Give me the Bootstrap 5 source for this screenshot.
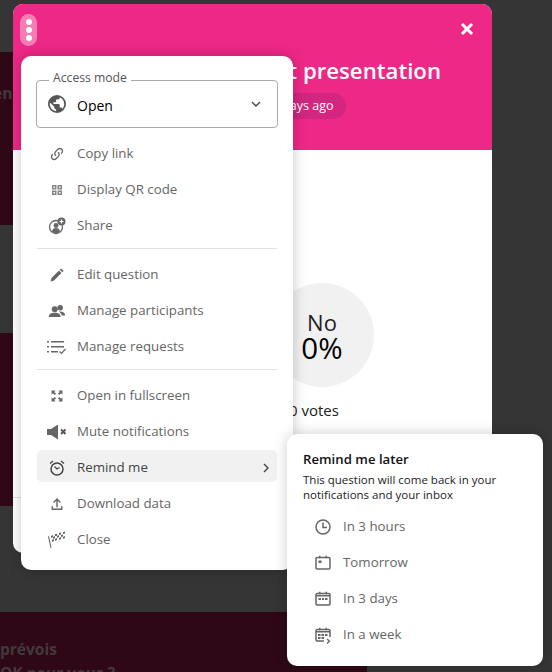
<!DOCTYPE html>
<html lang="en">
<head>
<meta charset="utf-8">
<title>Question</title>
<link href="https://cdn.jsdelivr.net/npm/bootstrap@5.3.0/dist/css/bootstrap.min.css" rel="stylesheet">
<style>
html,body{height:672px;overflow:hidden}
body{background:#353535;font-family:"Open Sans","Liberation Sans",sans-serif;position:relative}
.bg-stack{width:367px}
.bg-gap{background:#353535}
.bg-gap-a{height:52px}
.bg-gap-b{height:108px}
.bg-gap-c{height:106px}
.bg-tile{background:#2e0816;color:#43393d;font-weight:700;font-size:15.500px;line-height:24px;overflow:hidden}
.bg-tile-a{height:173px;padding-top:29px}
.bg-tile-b{height:173px;padding-top:30px}
.bg-tile-c{height:60px;padding-top:25px}
.bg-tile span{display:block;white-space:nowrap}
.shift-a{margin-left:-7px}
.shift-b{margin-left:-14px}
.q-modal{position:absolute;left:13px;top:4px;width:479px;height:549px;background:#fff;border-radius:10px;overflow:hidden}
.q-head{height:146px;background:#ee2887;color:#fff;padding-top:50px}
.q-title{font-size:22.200px;font-weight:600;line-height:34px;white-space:nowrap;text-align:right;padding-right:51px}
.q-pill{width:186px;height:26px;background:#d22680;border-radius:13px;font-size:12.500px;line-height:26px;margin:5px auto 0;text-align:right;padding-right:12px}
.q-x{position:absolute;right:18px;top:18px;width:14px;height:14px}
.q-dots{position:absolute;left:7px;top:10px;width:17px;height:32px;border-radius:9px;background:#f67db4;padding:5px 0;gap:2px}
.q-dots i{width:6px;height:6px;border-radius:50%;background:#fff}
.q-body{height:403px}
.q-disc{position:absolute;left:257px;top:279px;width:104px;height:104px;border-radius:50%;background:#f1f1f1;color:#222}
.q-disc-l{font-size:22px;line-height:24px;padding-top:1px}
.q-disc-v{font-size:29.500px;line-height:28px;color:#000}
.q-votes{position:absolute;left:249px;top:396px;width:104px;font-size:15px;line-height:20px;text-align:center;color:#222}
.q-rule{position:absolute;left:0;right:0;top:493px;border-top:1px solid #ddd}
.q-menu{position:absolute;left:21px;top:56px;width:272px;height:514px;background:#fff;border-radius:10px;box-shadow:0 0 14px rgba(0,0,0,.22);padding:24px 15px 0}
.q-field{position:relative;height:48px;border:1px solid #aaa;border-radius:4px;padding-left:11px;gap:11px;color:#000;font-size:14px;margin-bottom:7px}
.q-field span.q-val{padding-top:2px}
.q-legend{position:absolute;left:12px;top:-12px;padding:0 4px;background:#fff;font-size:12.200px;line-height:18px;color:#555}
.q-lines{margin:0 1px}
.q-row{height:36px;font-size:13.300px;color:#666;padding:2px 0 0 10px;gap:10px}
.q-row svg{flex:none}
.q-row.is-on{height:32px;margin:1px 0 3px;padding-top:4px;background:#f1f1f1;border-radius:5px;color:#444}
.q-sep{border-top:1px solid #e3e3e3;margin:5px 0 7px;height:0}
.q-ico{width:20px;height:20px;fill:#666}
.q-globe{width:18px;height:18px;fill:#555;flex:none}
.q-chev{margin-left:auto;margin-right:16px}
.q-chev-side{margin-left:auto;margin-right:8px}
.q-pop{position:absolute;left:287px;top:434px;width:256px;height:232px;background:#fff;border-radius:10px;box-shadow:0 0 14px rgba(0,0,0,.2);padding:16px 16px 0}
.q-pop-t{font-size:13.200px;font-weight:600;line-height:18px;color:#111}
.q-pop-d{font-size:11.500px;line-height:15px;color:#222;margin:4px 0 6px}
</style>
</head>
<body>
<div class="bg-stack">
  <div class="bg-gap bg-gap-a"></div>
  <div class="bg-tile bg-tile-a"><span class="shift-a">en</span></div>
  <div class="bg-gap bg-gap-b"></div>
  <div class="bg-tile bg-tile-b"><span class="shift-b">pl</span></div>
  <div class="bg-gap bg-gap-c"></div>
  <div class="bg-tile bg-tile-c"><span>prévois</span><span>OK pour vous ?</span></div>
</div>

<div class="q-modal">
  <div class="q-head">
    <div class="q-title">t presentation</div>
    <div class="q-pill">ays ago</div>
  </div>
  <div class="q-body"></div>
  <div class="q-disc d-flex flex-column align-items-center justify-content-center"><div class="q-disc-l">No</div><div class="q-disc-v">0%</div></div>
  <div class="q-votes">0 votes</div>
  <div class="q-rule"></div>
  <svg class="q-x" viewBox="0 0 14 14"><path d="M2 2 12 12M12 2 2 12" stroke="#fff" stroke-width="3"/></svg>
  <div class="q-dots d-flex flex-column align-items-center"><i></i><i></i><i></i></div>
</div>

<div class="q-menu">
  <div class="q-field d-flex align-items-center">
    <span class="q-legend">Access mode</span>
    <svg class="q-globe" viewBox="2 2 20 20"><path d="M17.9,17.39C17.64,16.59 16.89,16 16,16H15V13A1,1 0 0,0 14,12H8V10H10A1,1 0 0,0 11,9V7H13A2,2 0 0,0 15,5V4.59C17.93,5.77 20,8.64 20,12C20,14.08 19.2,15.97 17.9,17.39M11,19.93C7.05,19.44 4,16.08 4,12C4,11.38 4.08,10.78 4.21,10.21L9,15V16A2,2 0 0,0 11,18M12,2A10,10 0 0,0 2,12A10,10 0 0,0 12,22A10,10 0 0,0 22,12A10,10 0 0,0 12,2Z"/></svg>
    <span class="q-val">Open</span>
    <svg class="q-chev" width="10" height="6" viewBox="0 0 10 6"><path d="M1 1l4 4 4-4" fill="none" stroke="#444" stroke-width="1.400"/></svg>
  </div>
  <div class="q-lines">
  <div class="q-row d-flex align-items-center"><svg class="q-ico" viewBox="-3 -3 30 30"><path d="M10.59,13.41C11,13.8 11,14.44 10.59,14.83C10.2,15.22 9.56,15.22 9.17,14.83C7.22,12.88 7.22,9.71 9.17,7.76L12.71,4.22C14.66,2.27 17.83,2.27 19.78,4.22C21.73,6.17 21.73,9.34 19.78,11.29L18.29,12.78C18.3,11.96 18.17,11.14 17.89,10.36L18.36,9.88C19.54,8.71 19.54,6.81 18.36,5.64C17.19,4.46 15.29,4.46 14.12,5.64L10.59,9.17C9.41,10.34 9.41,12.24 10.59,13.41M13.41,9.17C13.8,8.78 14.44,8.78 14.83,9.17C16.78,11.12 16.78,14.29 14.83,16.24L11.29,19.78C9.34,21.73 6.17,21.73 4.22,19.78C2.27,17.83 2.27,14.66 4.22,12.71L5.71,11.22C5.7,12.04 5.83,12.86 6.11,13.65L5.64,14.12C4.46,15.29 4.46,17.19 5.64,18.36C6.81,19.54 8.71,19.54 9.88,18.36L13.41,14.83C14.59,13.66 14.59,11.76 13.41,10.59C13,10.2 13,9.56 13.41,9.17Z"/></svg>Copy link</div>
  <div class="q-row d-flex align-items-center"><svg class="q-ico" viewBox="0 0 20 20"><path fill-rule="evenodd" opacity=".8" d="M5 5h4.500v4.500H5zM6.500 6.500v1.500H8V6.500zM10.500 5H15v4.500h-4.500zM12 6.500v1.500h1.500V6.500zM5 10.500h4.500V15H5zM6.500 12v1.500H8V12zM10.500 10.500H15V15h-4.500zM12 12v1.500h1.500V12z"/></svg>Display QR code</div>
  <div class="q-row d-flex align-items-center"><svg class="q-ico" viewBox="-1 -1 20 20"><circle cx="8" cy="10" r="6.500" fill="none" stroke="#666" stroke-width="1.300"/><circle cx="8" cy="8.500" r="2.400"/><path d="M3.800 14.500c.6-2.500 2.300-3.500 4.200-3.500s3.600 1 4.200 3.500A6.500 6.500 0 0 1 3.800 14.500z"/><circle cx="13.500" cy="4.500" r="4"/><path d="M11.500 4.500h4M13.500 2.500v4" stroke="#fff" stroke-width="1.200"/></svg>Share</div>
  <div class="q-sep"></div>
  <div class="q-row d-flex align-items-center"><svg class="q-ico" viewBox="0 0 20 20"><path d="M3.500 16.500l1-3.500 7.500-7.500 2.500 2.500L7 15.500zM12.800 4.700l1.300-1.300 2.500 2.500-1.300 1.300z"/></svg>Edit question</div>
  <div class="q-row d-flex align-items-center"><svg class="q-ico" viewBox="-2 -2 22 22"><circle cx="6.500" cy="7" r="3.300"/><circle cx="12.500" cy="5.500" r="3"/><path d="M0 15.500c0-3 2.500-4.500 6.500-4.500s6.500 1.500 6.500 4.500zM11 9.700c3.800-.4 7 1 7 4.300h-3.800c-.2-1.800-1.300-3.200-3.200-4.300z"/></svg>Manage participants</div>
  <div class="q-row d-flex align-items-center"><svg class="q-ico" viewBox="0 -1 20 20"><path d="M0 3h2v1.500H0zM4 3h13v1.500H4zM0 8h2v1.500H0zM4 8h13v1.500H4zM0 13h2v1.500H0zM4 13h7v1.500H4z"/><path d="M12.500 13.500l2 2 4-4.500" fill="none" stroke="#666" stroke-width="1.200"/></svg>Manage requests</div>
  <div class="q-sep"></div>
  <div class="q-row d-flex align-items-center"><svg class="q-ico" viewBox="-2 -2 22 22"><path d="M3 3h4.500L6 4.500 8 6.500 6.500 8 4.500 6 3 7.500zM15 3v4.500L13.500 6 11.500 8 10 6.500 12 4.500 10.500 3zM3 15v-4.500L4.500 12l2-2L8 11.500l-2 2L7.500 15zM15 15h-4.500l1.500-1.500-2-2 1.500-1.500 2 2 1.500-1.500z"/></svg>Open in fullscreen</div>
  <div class="q-row d-flex align-items-center"><svg class="q-ico" viewBox="0 -1 20 20"><path d="M0 6h4l7-4.500v15L4 12H0z"/><path d="M14 6.500l4.500 4.500M18.500 6.500 14 11" stroke="#555" stroke-width="1.800"/></svg>Mute notifications</div>
  <div class="q-row is-on d-flex align-items-center"><svg class="q-ico" viewBox="-1 -1 20 20"><circle cx="9" cy="10" r="6" fill="none" stroke="#444" stroke-width="1.500"/><path d="M6.500 7.500 9 10l2.500-1.500M2 4.500 5 2M16 4.500 13 2" fill="none" stroke="#444" stroke-width="1.300"/></svg>Remind me<svg class="q-chev-side" width="6" height="10" viewBox="0 0 6 10"><path d="M1 1l4 4-4 4" fill="none" stroke="#444" stroke-width="1.400"/></svg></div>
  <div class="q-row d-flex align-items-center"><svg class="q-ico" viewBox="-2 -2 22 22"><path d="M8.200 12.500V5.500L5.800 7.900 4.700 6.800 9 2.500l4.300 4.300-1.100 1.100-2.400-2.400v7zM3 11.500h1.600V14h8.800v-2.500H15V15.500H3z"/></svg>Download data</div>
  <div class="q-row d-flex align-items-center"><svg class="q-ico" viewBox="0 -1 20 20"><path d="M2 5l2.500 12h-1L1 5.500zM4 5l2-1v2l-2 1zM8 3h2v2H8zM12 2l2-.5v2l-2 .5zM16 1l2-.5v2l-2 .5zM6 6l2-1v2l-2 1zM10 5l2-1v2l-2 1zM14 4l2-.5v2l-2 .5zM5 9l2-1v2l-2 1zM8 8l2-1v2l-2 1zM12 7l2-1v2l-2 1zM16 6l2-1v2l-2 1z"/></svg>Close</div>
  </div>
</div>

<div class="q-pop">
  <div class="q-pop-t">Remind me later</div>
  <div class="q-pop-d">This question will come back in your notifications and your inbox</div>
  <div class="q-row d-flex align-items-center"><svg class="q-ico" viewBox="-1 -1 20 20"><circle cx="9" cy="9" r="7" fill="none" stroke="#666" stroke-width="1.500"/><path d="M9 4.500V9.500h4" fill="none" stroke="#666" stroke-width="1.500"/></svg>In 3 hours</div>
  <div class="q-row d-flex align-items-center"><svg class="q-ico" viewBox="-1 -1 20 20"><rect x="2" y="3.500" width="14" height="11.500" rx="1.200" fill="none" stroke="#666" stroke-width="1.500"/><path d="M5 1.800h1.500v2.500H5zM11.500 1.800H13v2.500h-1.500zM4.500 6.500h3v2.500h-3z"/></svg>Tomorrow</div>
  <div class="q-row d-flex align-items-center"><svg class="q-ico" viewBox="-1 -1 20 20"><rect x="2" y="3.500" width="14" height="11.500" rx="1.200" fill="none" stroke="#666" stroke-width="1.500"/><path d="M5 1.800h1.500v2.500H5zM11.500 1.800H13v2.500h-1.500zM2 5h14v1.500H2zM4.500 8h2.500v2H4.500zM8 8h2v2H8zM11 8h2.500v2H11z"/></svg>In 3 days</div>
  <div class="q-row d-flex align-items-center"><svg class="q-ico" viewBox="-1 -1 20 20"><path d="M10 15H3.200A1.200 1.200 0 0 1 2 13.800V4.700A1.200 1.200 0 0 1 3.200 3.500h11.600A1.200 1.200 0 0 1 16 4.700V11" fill="none" stroke="#666" stroke-width="1.500"/><path d="M5 1.800h1.500v2.500H5zM11.500 1.800H13v2.500h-1.500zM2 5h14v1.500H2zM4 8h2.500v2H4zM7.500 8H10v2H7.500zM11 8h2.500v2H11zM4 11h2.500v2H4zM7.500 11H10v2H7.500z"/><path d="M13 13l2.500 2.300L13 17.500" fill="none" stroke="#666" stroke-width="1.300"/></svg>In a week</div>
</div>
<script src="https://cdn.jsdelivr.net/npm/bootstrap@5.3.0/dist/js/bootstrap.bundle.min.js"></script>
</body>
</html>
